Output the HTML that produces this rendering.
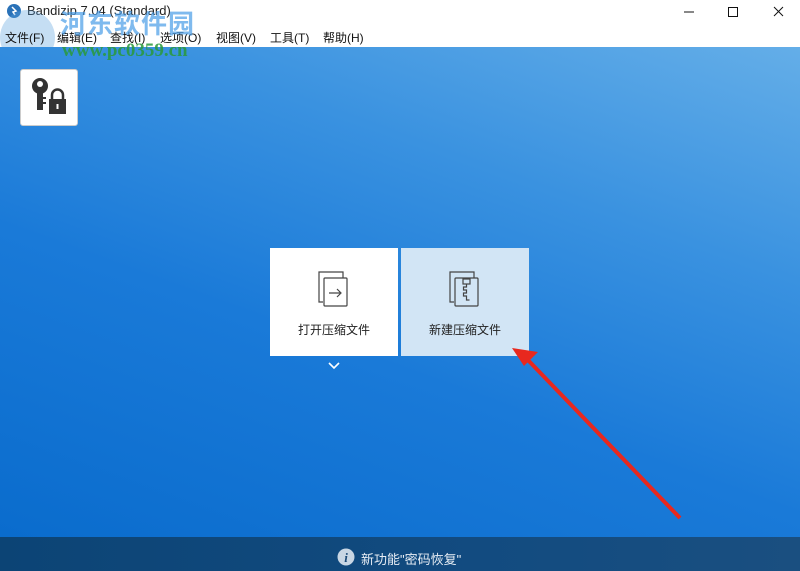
<!DOCTYPE html><html><head><meta charset="utf-8"><style>
body{margin:0;width:800px;height:571px;overflow:hidden;position:relative;font-family:"Liberation Sans","Noto Sans CJK SC",sans-serif;background:#fff}
.t{position:absolute;left:0;top:0;width:800px;height:47px;background:#fff}
.menu{position:absolute;top:29px;font-size:12px;color:#111;white-space:nowrap}
.main{position:absolute;left:0;top:47px;width:800px;height:490px;background:linear-gradient(200deg,#64aee8 0%,#3a92e0 30%,#1a7ad8 60%,#0a6ccd 100%)}
.bar{position:absolute;left:0;top:537px;width:800px;height:34px;background:linear-gradient(90deg,#0c4475,#124b80 60%,#1a4f80)}
.card{position:absolute;top:248px;width:128px;height:108px;background:#fff}
.lbl{position:absolute;top:73px;width:100%;text-align:center;font-size:12px;color:#222}
</style></head><body>
<div class="t">
<svg style="position:absolute;left:7px;top:4px" width="14" height="14"><circle cx="7" cy="7" r="7" fill="#2a72b8"/><path d="M5 3l4 4-3 1 2 3" stroke="#fff" stroke-width="1.5" fill="none"/></svg>
<div style="position:absolute;left:27px;top:3px;font-size:13px;color:#222">Bandizip 7.04 (Standard)</div>
<div style="position:absolute;left:0;top:10px;width:55px;height:55px;border-radius:50%;background:rgba(90,160,220,.35)"></div>
<div class="menu" style="left:5px">文件(F)</div><div class="menu" style="left:57px">编辑(E)</div><div class="menu" style="left:110px">查找(I)</div><div class="menu" style="left:160px">选项(O)</div><div class="menu" style="left:216px">视图(V)</div><div class="menu" style="left:270px">工具(T)</div><div class="menu" style="left:323px">帮助(H)</div>
<div style="position:absolute;left:60px;top:4px;font-size:26px;font-weight:bold;color:#4a9ee8;opacity:.7;letter-spacing:1px">河东软件园</div>
<svg style="position:absolute;left:680px;top:4px" width="120" height="16"><path d="M4 8h10" stroke="#111"/><rect x="48.5" y="3.5" width="9" height="9" fill="none" stroke="#111"/><path d="M94 3l9 9M103 3l-9 9" stroke="#111"/></svg>
</div>
<div class="main"></div>
<div style="position:absolute;left:62px;top:40px;font-size:19px;font-weight:bold;color:#2a9a3a;font-family:'Liberation Serif',serif;opacity:.85">www.pc0359.cn</div>
<div style="position:absolute;left:20px;top:69px;width:56px;height:55px;background:#fff;border-radius:3px;border:1px solid #ccc"></div>
<svg style="position:absolute;left:28px;top:76px" width="42" height="42"><circle cx="12" cy="10" r="8" fill="#333"/><circle cx="12" cy="8" r="3" fill="#fff"/><rect x="9" y="16" width="6" height="18" fill="#333"/><path d="M15 22h3M15 27h3" stroke="#333" stroke-width="2"/><rect x="21" y="23" width="17" height="15" fill="#333"/><path d="M24 23v-4a5 5 0 0 1 11 0v4" stroke="#333" stroke-width="2.5" fill="none"/><rect x="28.5" y="28" width="2" height="5" fill="#fff"/></svg>
<div class="card" style="left:270px"><svg style="position:absolute;left:47px;top:22px" width="34" height="40" fill="none" stroke="#444" stroke-width="1.2"><path d="M6 32H2V2h24v6"/><rect x="7" y="8" width="23" height="28" rx="1"/><path d="M12 23h11M20 19l4 4-4 4"/></svg><div class="lbl">打开压缩文件</div></div>
<div class="card" style="left:401px;background:#d2e5f5"><svg style="position:absolute;left:47px;top:22px" width="34" height="40" fill="none" stroke="#444" stroke-width="1.2"><path d="M6 32H2V2h24v6"/><rect x="7" y="8" width="23" height="28" rx="1"/><rect x="15" y="9" width="7" height="5"/><path d="M18.5 14v3h-3v3h3v3h-3v3h3v4h3"/></svg><div class="lbl">新建压缩文件</div></div>
<svg style="position:absolute;left:328px;top:362px" width="12" height="8"><path d="M1 1l5 5 5-5" stroke="#fff" stroke-width="1.6" fill="none"/></svg>
<svg style="position:absolute;left:0;top:0" width="800" height="571"><path d="M680 518L526 358" stroke="#e8281e" stroke-width="4"/><path d="M512 348l26 4-14 14z" fill="#e8281e"/></svg>
<div class="bar"></div>
<svg style="position:absolute;left:337px;top:548px" width="18" height="18"><circle cx="9" cy="9" r="8.5" fill="#c8d6e4"/><text x="9" y="14" font-size="13" font-style="italic" font-weight="bold" fill="#1b4a78" text-anchor="middle" font-family="Liberation Serif">i</text></svg>
<div style="position:absolute;left:361px;top:549px;font-size:13px;color:#e8eef5">新功能"密码恢复"</div>
</body></html>
